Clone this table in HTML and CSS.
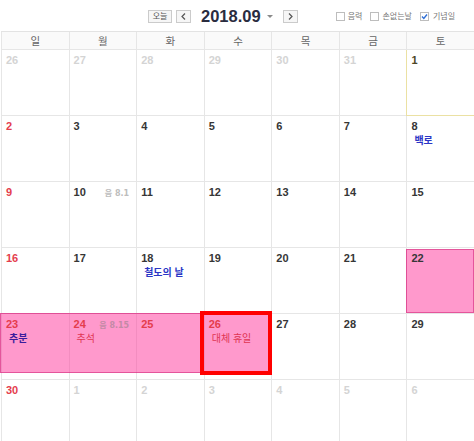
FILE: index.html
```html
<!DOCTYPE html>
<html lang="ko">
<head>
<meta charset="utf-8">
<title>2018.09</title>
<link rel="stylesheet" href="styles.css">
</head>
<body>
<div class="cal">
  <div class="topbar">
    <button class="btn today-btn">오늘</button>
    <button class="btn arrow prev"><svg width="5" height="7" viewBox="0 0 5 7"><path d="M4 0.5 L1 3.5 L4 6.5" fill="none" stroke="#555" stroke-width="1.2"/></svg></button>
    <div class="month">2018.09</div>
    <span class="caret"></span>
    <button class="btn arrow next"><svg width="5" height="7" viewBox="0 0 5 7"><path d="M1 0.5 L4 3.5 L1 6.5" fill="none" stroke="#555" stroke-width="1.2"/></svg></button>
    <div class="opts">
      <label class="opt"><span class="box"></span>음력</label>
      <label class="opt"><span class="box"></span>손없는날</label>
      <label class="opt checked"><span class="box"><svg width="7" height="7" viewBox="0 0 7 7"><path d="M1 3.6 L2.8 5.4 L6 1.5" fill="none" stroke="#2f6fd6" stroke-width="1.4"/></svg></span>기념일</label>
    </div>
  </div>

  <div class="weekdays">
    <div class="wd">일</div><div class="wd">월</div><div class="wd">화</div><div class="wd">수</div><div class="wd">목</div><div class="wd">금</div><div class="wd">토</div>
  </div>

  <div class="week">
    <div class="cell"><div class="nrow"><span class="num other">26</span></div></div>
    <div class="cell"><div class="nrow"><span class="num other">27</span></div></div>
    <div class="cell"><div class="nrow"><span class="num other">28</span></div></div>
    <div class="cell"><div class="nrow"><span class="num other">29</span></div></div>
    <div class="cell"><div class="nrow"><span class="num other">30</span></div></div>
    <div class="cell"><div class="nrow"><span class="num other">31</span></div></div>
    <div class="cell today"><div class="nrow"><span class="num today-num">1</span></div></div>
  </div>

  <div class="week">
    <div class="cell"><div class="nrow"><span class="num sun">2</span></div></div>
    <div class="cell"><div class="nrow"><span class="num">3</span></div></div>
    <div class="cell"><div class="nrow"><span class="num">4</span></div></div>
    <div class="cell"><div class="nrow"><span class="num">5</span></div></div>
    <div class="cell"><div class="nrow"><span class="num">6</span></div></div>
    <div class="cell"><div class="nrow"><span class="num">7</span></div></div>
    <div class="cell"><div class="nrow"><span class="num">8</span></div><div class="label blue">백로</div></div>
  </div>

  <div class="week">
    <div class="cell"><div class="nrow"><span class="num sun">9</span></div></div>
    <div class="cell"><div class="nrow"><span class="num">10</span><span class="lunar">음 8.1</span></div></div>
    <div class="cell"><div class="nrow"><span class="num">11</span></div></div>
    <div class="cell"><div class="nrow"><span class="num">12</span></div></div>
    <div class="cell"><div class="nrow"><span class="num">13</span></div></div>
    <div class="cell"><div class="nrow"><span class="num">14</span></div></div>
    <div class="cell"><div class="nrow"><span class="num">15</span></div></div>
  </div>

  <div class="week">
    <div class="cell"><div class="nrow"><span class="num sun">16</span></div></div>
    <div class="cell"><div class="nrow"><span class="num">17</span></div></div>
    <div class="cell"><div class="nrow"><span class="num">18</span></div><div class="label blue">철도의 날</div></div>
    <div class="cell"><div class="nrow"><span class="num">19</span></div></div>
    <div class="cell"><div class="nrow"><span class="num">20</span></div></div>
    <div class="cell"><div class="nrow"><span class="num">21</span></div></div>
    <div class="cell"><div class="nrow"><span class="num">22</span></div></div>
    <div class="bar bar-sat"></div>
  </div>

  <div class="week">
    <div class="cell"><div class="nrow"><span class="num sun">23</span></div><div class="label navy">추분</div></div>
    <div class="cell"><div class="nrow"><span class="num sun">24</span><span class="lunar on-pink">음 8.15</span></div><div class="label red">추석</div></div>
    <div class="cell"><div class="nrow"><span class="num sun">25</span></div></div>
    <div class="cell"><div class="nrow"><span class="num sun">26</span></div><div class="label red">대체 휴일</div></div>
    <div class="cell"><div class="nrow"><span class="num">27</span></div></div>
    <div class="cell"><div class="nrow"><span class="num">28</span></div></div>
    <div class="cell"><div class="nrow"><span class="num">29</span></div></div>
    <div class="bar bar-chuseok"></div>
    <div class="redbox"></div>
  </div>

  <div class="week">
    <div class="cell"><div class="nrow"><span class="num sun">30</span></div></div>
    <div class="cell"><div class="nrow"><span class="num other">1</span></div></div>
    <div class="cell"><div class="nrow"><span class="num other">2</span></div></div>
    <div class="cell"><div class="nrow"><span class="num other">3</span></div></div>
    <div class="cell"><div class="nrow"><span class="num other">4</span></div></div>
    <div class="cell"><div class="nrow"><span class="num other">5</span></div></div>
    <div class="cell"><div class="nrow"><span class="num other">6</span></div></div>
  </div>
</div>
</body>
</html>
```

FILE: styles.css
```css
* { box-sizing: border-box; }

body {
  margin: 0;
  width: 474px;
  height: 441px;
  overflow: hidden;
  background: #fff;
  font-family: "Liberation Sans", "Noto Sans CJK KR", sans-serif;
}

.cal { width: 474px; }

/* top bar */
.topbar {
  height: 31px;
  display: flex;
  align-items: center;
  padding: 1px 0 0 148px;
}

.btn {
  height: 13px;
  border: 1px solid #cbcbcb;
  background: #f6f6f6;
  display: flex;
  align-items: center;
  justify-content: center;
  padding: 0;
  margin: 0;
}

.today-btn {
  width: 24px;
  font-family: "Noto Sans CJK KR", sans-serif;
  font-size: 8px;
  line-height: 1;
  color: #555;
}

.arrow { width: 15px; }
.prev { margin-left: 4px; }
.next { margin-left: 10px; }

.month {
  margin-left: 10px;
  font-family: "Liberation Sans", sans-serif;
  font-weight: bold;
  font-size: 16.5px;
  line-height: 1;
  color: #2a2c3f;
}

.caret {
  margin-left: 6px;
  margin-top: 1px;
  width: 0;
  height: 0;
  border-left: 3px solid transparent;
  border-right: 3px solid transparent;
  border-top: 3px solid #8a8a8a;
}

.opts {
  margin-left: auto;
  margin-right: 19px;
  display: flex;
  align-items: center;
}

.opt {
  display: flex;
  align-items: center;
  font-family: "Noto Sans CJK KR", sans-serif;
  font-size: 8px;
  line-height: 1;
  color: #777;
  margin-left: 8px;
}
.opt:first-child { margin-left: 0; }

.box {
  width: 9px;
  height: 9px;
  border: 1px solid #bdbdbd;
  background: #fff;
  margin-right: 3px;
  display: flex;
  align-items: center;
  justify-content: center;
}
.checked .box { margin-right: 4px; }

/* weekday header */
.weekdays {
  display: grid;
  grid-template-columns: repeat(7, 1fr);
  margin-left: 1px;
  border-top: 1px solid #e3e3e3;
}

.wd {
  height: 18px;
  border-left: 1px solid #e6e6e6;
  border-bottom: 1px solid #e6e6e6;
  background: #fafafa;
  text-align: center;
  font-family: "Noto Sans CJK KR", sans-serif;
  font-size: 10.5px;
  line-height: 17px;
  color: #666;
}

/* weeks */
.week {
  display: grid;
  grid-template-columns: repeat(7, 1fr);
  grid-template-rows: 66px;
  margin-left: 1px;
}

.cell {
  grid-row: 1;
  border-left: 1px solid #e6e6e6;
  border-bottom: 1px solid #e6e6e6;
  padding: 4px 7px 0 4px;
}
.cell:nth-child(1) { grid-column: 1; }
.cell:nth-child(2) { grid-column: 2; }
.cell:nth-child(3) { grid-column: 3; }
.cell:nth-child(4) { grid-column: 4; }
.cell:nth-child(5) { grid-column: 5; }
.cell:nth-child(6) { grid-column: 6; }
.cell:nth-child(7) { grid-column: 7; }

.cell.today { border-left-color: #ebe1a3; border-bottom-color: #ebe1a3; }

.nrow {
  position: relative;
  z-index: 2;
  display: flex;
  justify-content: space-between;
  align-items: baseline;
}

.num {
  font-family: "Liberation Sans", sans-serif;
  font-weight: bold;
  font-size: 11px;
  line-height: 13px;
  color: #363636;
}
.num.sun { color: #e43d4d; }
.num.other { color: #d4d4d4; }
.num.today-num { color: #4d4626; }

.lunar {
  font-family: "DejaVu Sans", "Noto Sans CJK KR", sans-serif;
  font-weight: bold;
  font-size: 8px;
  color: #bdbdbd;
}
.lunar.on-pink { color: #c38aa6; }

.label {
  position: relative;
  z-index: 2;
  margin-top: 1px;
  padding-left: 3px;
  font-family: "Noto Sans CJK KR", sans-serif;
  font-size: 10px;
  line-height: 12px;
  white-space: nowrap;
}
.label.blue { color: #2a36c6; font-weight: bold; }
.label.navy { color: #3a1d9c; font-weight: bold; }
.label.red { color: #e03552; }

/* event bars */
.bar {
  grid-row: 1;
  z-index: 1;
  align-self: start;
  background: rgba(255, 51, 153, 0.5);
  border: 1px solid rgba(205, 30, 115, 0.55);
}

.bar-sat {
  grid-column: 7;
  margin-top: 1px;
  height: 64px;
}

.bar-chuseok {
  grid-column: 1 / 5;
  margin: -1px 0 0 -1px;
  height: 60px;
}

.redbox {
  grid-row: 1;
  grid-column: 4;
  z-index: 3;
  align-self: start;
  margin: -3px -1px 0 -4px;
  height: 64px;
  border: 4px solid #ff0000;
}
```
